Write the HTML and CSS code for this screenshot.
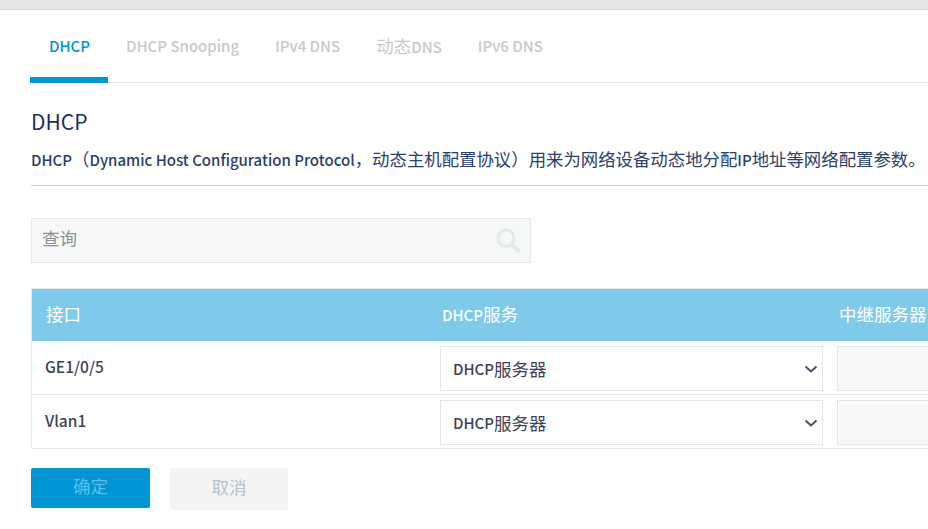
FILE: index.html
```html
<!DOCTYPE html>
<html lang="zh-CN">
<head>
    <meta charset="UTF-8">
    <meta name="viewport" content="width=device-width, initial-scale=1.0">
    <title>DHCP</title>
    <link rel="stylesheet" href="styles.css">
</head>
<body>

    <div class="page">
        <div class="topbar"></div>

        <div class="tabs">
            <a class="tab active">DHCP</a>
            <a class="tab">DHCP Snooping</a>
            <a class="tab">IPv4 DNS</a>
            <a class="tab"><span class="zh">动态</span>DNS</a>
            <a class="tab">IPv6 DNS</a>
        </div>

        <div class="content">
            <h2>DHCP</h2>
            <p class="desc">DHCP<span class="zh">（</span>Dynamic Host Configuration Protocol<span class="zh">，动态主机配置协议）用来为网络设备动态地分配</span>IP<span class="zh">地址等网络配置参数。</span></p>

            <div class="search">
                <input type="text" placeholder="查询">
                <svg class="search-icon" width="26" height="26" viewBox="0 0 26 26">
                    <circle cx="11" cy="11" r="8" fill="none" stroke="#e6e9e9" stroke-width="3"/>
                    <path d="M16.5 17 L23 23.5" stroke="#e6e9e9" stroke-width="4" stroke-linecap="round"/>
                </svg>
            </div>

            <div class="table">
                <div class="row head">
                    <div class="cell"><span class="zh">接口</span></div>
                    <div class="cell">DHCP<span class="zh">服务</span></div>
                    <div class="cell"><span class="zh">中继服务器</span></div>
                </div>
                <div class="row">
                    <div class="cell name">GE1/0/5</div>
                    <div class="cell">
                        <div class="select">
                            DHCP<span class="zh">服务器</span>
                            <svg class="chevron" width="14" height="10" viewBox="0 0 14 10"><path d="M1.5 2.5 L7 7.5 L12.5 2.5" fill="none" stroke="#4d4f66" stroke-width="2"/></svg>
                        </div>
                    </div>
                    <div class="cell"><input class="relay" type="text" disabled></div>
                </div>
                <div class="row">
                    <div class="cell name">Vlan1</div>
                    <div class="cell">
                        <div class="select">
                            DHCP<span class="zh">服务器</span>
                            <svg class="chevron" width="14" height="10" viewBox="0 0 14 10"><path d="M1.5 2.5 L7 7.5 L12.5 2.5" fill="none" stroke="#4d4f66" stroke-width="2"/></svg>
                        </div>
                    </div>
                    <div class="cell"><input class="relay" type="text" disabled></div>
                </div>
            </div>

            <div class="buttons">
                <button class="btn ok">确定</button>
                <button class="btn cancel">取消</button>
            </div>
        </div>
    </div>

</body>
</html>
```

FILE: styles.css
```css
html, body {
    height: 100%;
    overflow: hidden;
}
body {
    margin: 0;
    background: #fff;
    font-family: "Noto Sans CJK SC", sans-serif;
    font-size: 15px;
    font-weight: 500;
    color: #3f4254;
}
.zh {
    font-size: 17px;
    font-weight: 400;
}
.page {
    width: 1240px;
}
.topbar {
    height: 9px;
    background: #e4e5e7;
    border-bottom: 1px solid #d5d7da;
}
.tabs {
    display: flex;
    height: 72px;
    margin-left: 30px;
    border-bottom: 1px solid #e5e7e9;
}
.tab {
    height: 67px;
    padding: 0 18px;
    line-height: 72px;
    color: #c8c9ca;
}
.tab .zh {
    font-size: 17.5px;
}
.tab.active {
    padding-left: 19px;
    color: #0096d6;
    border-bottom: 6px solid #0096d6;
}
.content {
    padding: 0 0 0 31px;
}
h2 {
    margin: 22px 0 0;
    font-size: 21px;
    line-height: 32px;
    font-weight: 400;
    color: #1b2f5e;
}
.desc {
    margin: 9px 0 0;
    padding-bottom: 12px;
    line-height: 26px;
    color: #2a4068;
    border-bottom: 1px solid #cdd2d6;
}
.desc .zh {
    font-size: 17.4px;
}
.search {
    position: relative;
    width: 500px;
    margin-top: 32px;
}
.search input {
    display: block;
    box-sizing: border-box;
    width: 100%;
    height: 45px;
    padding: 0 10px 7px;
    background: #f6f7f7;
    border: 1px solid #e6e8e8;
    font-family: inherit;
    font-size: 17.5px;
}
.search input::placeholder {
    color: #8d9191;
    opacity: 1;
}
.search-icon {
    position: absolute;
    top: 9px;
    right: 10px;
}
.table {
    margin-top: 25px;
    border: 1px solid #e5e7e8;
    border-right: none;
}
.row {
    display: grid;
    grid-template-columns: 396px 397px 400px;
    height: 53px;
    border-bottom: 1px solid #e5e7e8;
}
.row:last-child {
    border-bottom: none;
}
.row.head {
    height: 52px;
    border-bottom: none;
    background: #7fc9eb;
    color: #fff;
    line-height: 49px;
}
.row.head .zh {
    font-size: 17.5px;
}
.cell {
    padding-left: 14px;
}
.name {
    padding-left: 13px;
    font-size: 15.5px;
    line-height: 51px;
}
.select {
    position: relative;
    display: flex;
    align-items: center;
    box-sizing: border-box;
    width: 383px;
    height: 45px;
    margin: 5px 0 0 -2px;
    padding: 0 12px 1px;
    background: #fff;
    border: 1px solid #e4e6e6;
}
.select .zh {
    font-size: 17.5px;
}
.chevron {
    position: absolute;
    top: 17px;
    right: 4px;
}
.relay {
    display: block;
    box-sizing: border-box;
    width: 200px;
    height: 45px;
    margin: 5px 0 0 -2px;
    background: #f8f8f8;
    border: 1px solid #e4e6e6;
}
.buttons {
    display: flex;
    align-items: flex-start;
    gap: 20px;
    margin-top: 19px;
}
.btn {
    border: none;
    border-radius: 2px;
    font-family: inherit;
    font-size: 17.5px;
    font-weight: 400;
}
.ok {
    width: 119px;
    height: 40px;
    padding-bottom: 7px;
    background: #0096d6;
    color: #5fbde6;
}
.cancel {
    width: 118px;
    height: 42px;
    padding-bottom: 7px;
    background: #f4f4f4;
    color: #b4c2cc;
}
```
